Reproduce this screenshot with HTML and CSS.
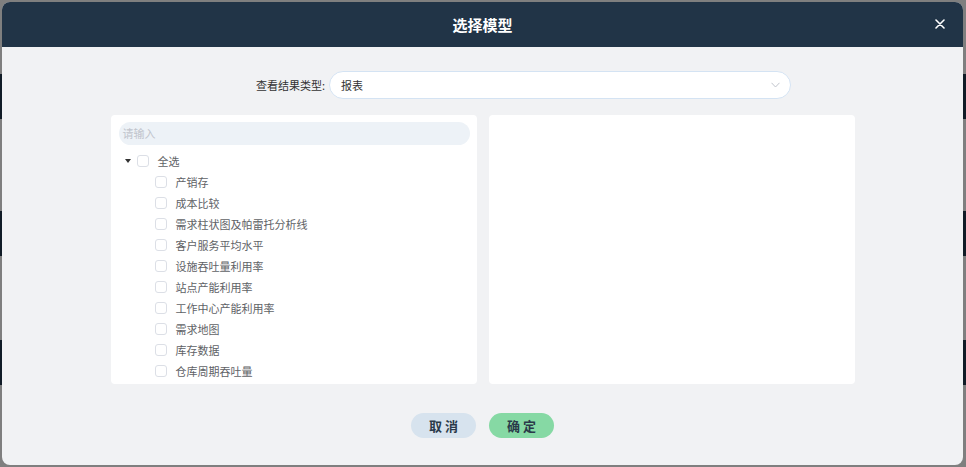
FILE: index.html
```html
<!DOCTYPE html>
<html lang="zh-CN">
<head>
  <meta charset="UTF-8" />
  <title>选择模型</title>
  <link rel="stylesheet" href="styles.css">
</head>
<body>
  <div class="dialog">
    <!-- Header -->
    <div class="dialog-header">
      <span class="dialog-title">选择模型</span>
      <span class="dialog-close">
        <svg width="10" height="10" viewBox="0 0 10 10"><path d="M1 1L9 9M9 1L1 9" stroke="#fff" stroke-width="1.6" stroke-linecap="round"/></svg>
      </span>
    </div>
    <!-- Body -->
    <div class="dialog-body">
      <div class="form-row">
        <label class="form-label">查看结果类型:</label>
        <div class="select">
          <span>报表</span>
          <svg class="select-arrow" width="9" height="6" viewBox="0 0 9 6"><path d="M0.5 0.8L4.5 5L8.5 0.8" fill="none" stroke="#c0c4cc" stroke-width="1"/></svg>
        </div>
      </div>
      <div class="panels">
        <div class="panel">
          <div class="search">请输入</div>
          <div class="tree">
            <div class="tree-row">
              <span class="caret"></span>
              <span class="checkbox"></span>
              <span>全选</span>
            </div>
            <div class="tree-row child"><span class="checkbox"></span><span>产销存</span></div>
            <div class="tree-row child"><span class="checkbox"></span><span>成本比较</span></div>
            <div class="tree-row child"><span class="checkbox"></span><span>需求柱状图及帕雷托分析线</span></div>
            <div class="tree-row child"><span class="checkbox"></span><span>客户服务平均水平</span></div>
            <div class="tree-row child"><span class="checkbox"></span><span>设施吞吐量利用率</span></div>
            <div class="tree-row child"><span class="checkbox"></span><span>站点产能利用率</span></div>
            <div class="tree-row child"><span class="checkbox"></span><span>工作中心产能利用率</span></div>
            <div class="tree-row child"><span class="checkbox"></span><span>需求地图</span></div>
            <div class="tree-row child"><span class="checkbox"></span><span>库存数据</span></div>
            <div class="tree-row child"><span class="checkbox"></span><span>仓库周期吞吐量</span></div>
          </div>
        </div>
        <div class="panel"></div>
      </div>
    </div>
    <!-- Footer -->
    <div class="dialog-footer">
      <button class="btn btn-cancel">取消</button>
      <button class="btn btn-ok">确定</button>
    </div>
  </div>
</body>
</html>
```

FILE: styles.css
```css
/* Global */
html, body {
  margin: 0;
  padding: 0;
  height: 100%;
  font-family: 'Noto Sans CJK SC', 'Noto Sans', sans-serif;
}
body {
  background:
    linear-gradient(to bottom,
      #7f7f7f 0, #7f7f7f 74px,
      #111c27 74px, #111c27 119px,
      #7f7f7f 119px, #7f7f7f 211px,
      #111c27 211px, #111c27 256px,
      #7f7f7f 256px, #7f7f7f 340px,
      #111c27 340px, #111c27 385px,
      #7f7f7f 385px);
  overflow: hidden;
}
/* Dialog */
.dialog {
  margin: 2px 0 0 2px;
  width: 961px;
  height: 463px;
  background: #f1f2f4;
  border-radius: 8px;
  overflow: hidden;
  display: flex;
  flex-direction: column;
}
.dialog-header {
  height: 45px;
  background: #213447;
  display: flex;
  align-items: center;
  justify-content: center;
  position: relative;
}
.dialog-title {
  color: #fff;
  font-size: 15px;
  font-weight: bold;
}
.dialog-close {
  position: absolute;
  right: 18px;
  top: 17px;
  width: 10px;
  height: 10px;
  display: flex;
}
/* Body */
.dialog-body {
  padding-top: 24px;
}
.form-row {
  display: flex;
  align-items: center;
  padding-left: 247px;
}
.form-label {
  width: 76px;
  padding-right: 4px;
  text-align: right;
  font-size: 11px;
  color: #333;
}
.select {
  height: 26px;
  width: 439px;
  border: 1px solid #d4e3f3;
  border-radius: 14px;
  background: #fff;
  display: flex;
  align-items: center;
  justify-content: space-between;
  padding: 0 10px 0 11px;
  font-size: 11px;
  color: #333;
}
.panels {
  display: flex;
  justify-content: center;
  gap: 12px;
  margin-top: 16px;
}
.panel {
  width: 366px;
  height: 269px;
  background: #fff;
  border-radius: 4px;
  padding: 7px 7px 0 8px;
  box-sizing: border-box;
}
.search {
  height: 23px;
  border-radius: 12px;
  background: #edf2f7;
  font-size: 11px;
  color: #c0c4cc;
  line-height: 23px;
  padding-left: 4px;
}
.tree {
  margin-top: 5px;
}
.tree-row {
  height: 21px;
  display: flex;
  align-items: center;
  font-size: 11px;
  color: #606266;
  padding-left: 6px;
}
.tree-row.child {
  padding-left: 36px;
}
.caret {
  width: 0;
  height: 0;
  border-left: 3px solid transparent;
  border-right: 3px solid transparent;
  border-top: 4px solid #333;
  margin-right: 6px;
}
.checkbox {
  width: 10px;
  height: 10px;
  border: 1px solid #dcdfe6;
  border-radius: 3px;
  background: #fff;
  margin-right: 9px;
}
/* Footer */
.dialog-footer {
  display: flex;
  justify-content: center;
  gap: 13px;
  padding-top: 29px;
}
.btn {
  width: 65px;
  height: 25px;
  border: none;
  border-radius: 13px;
  font-family: inherit;
  font-size: 13px;
  font-weight: bold;
  letter-spacing: 3px;
  padding: 0 0 0 3px;
  color: #2b3a4a;
  cursor: pointer;
}
.btn-cancel {
  background: #d7e3ee;
}
.btn-ok {
  background: #86d9a4;
}
```
